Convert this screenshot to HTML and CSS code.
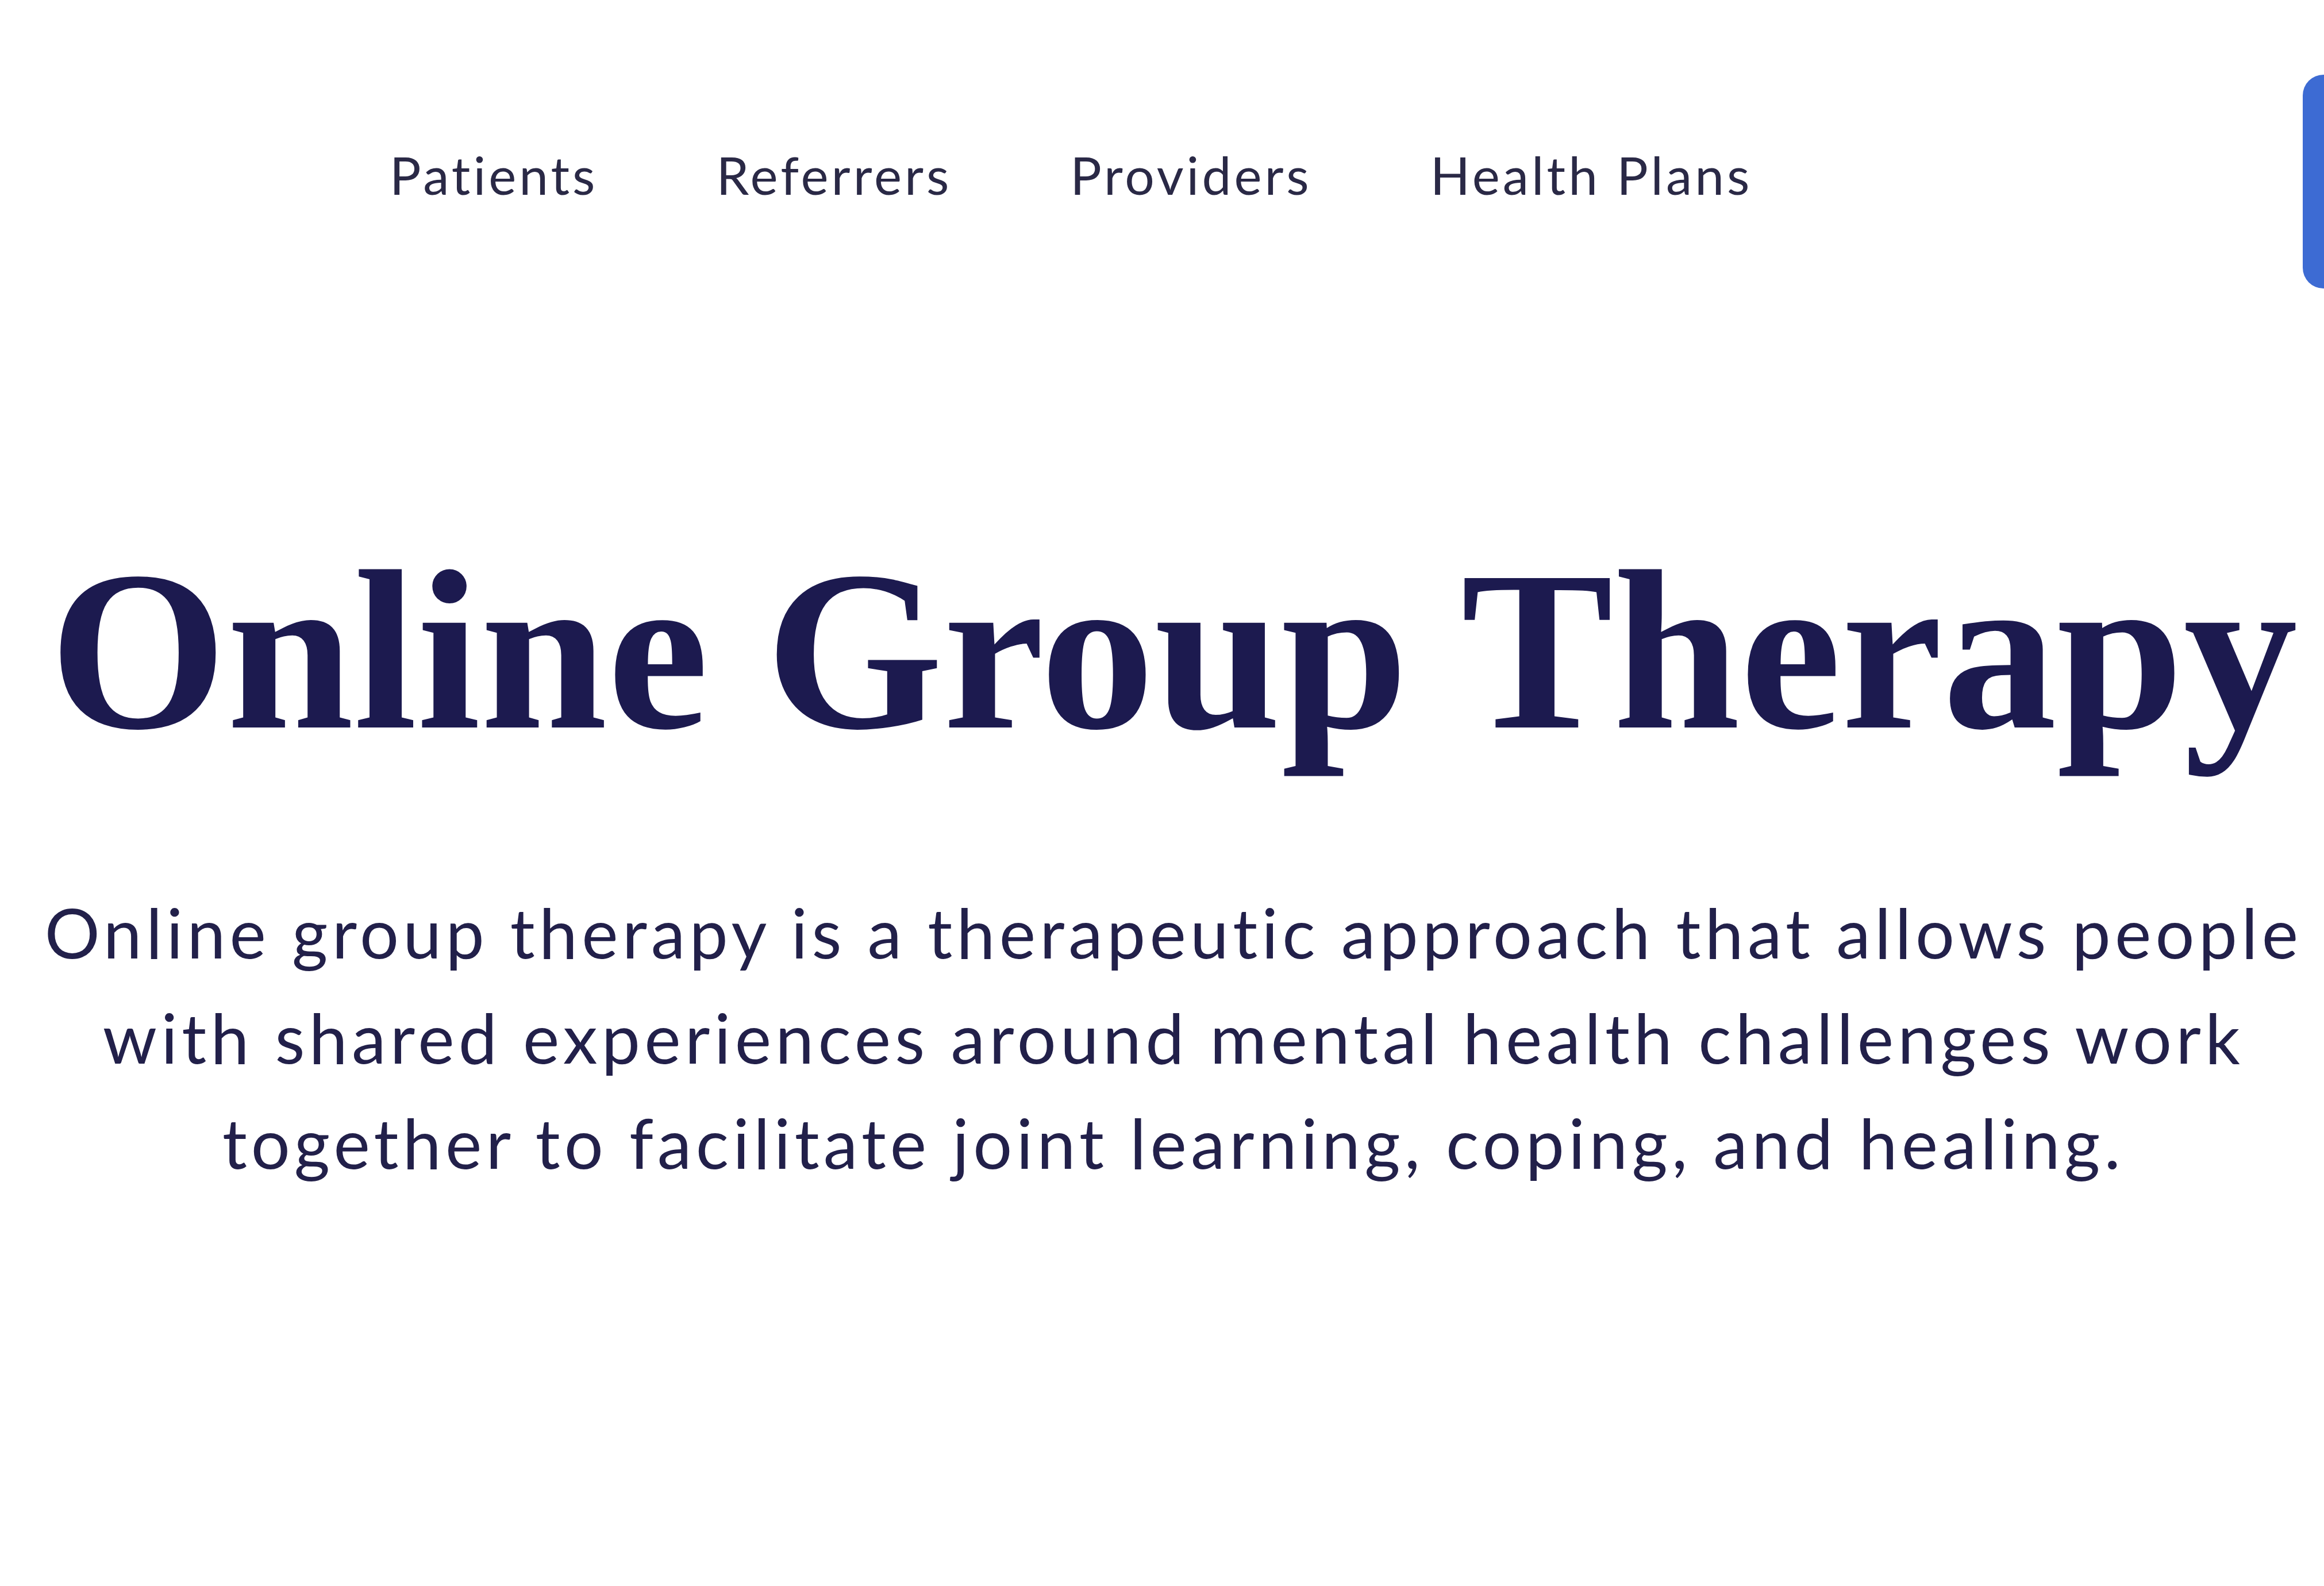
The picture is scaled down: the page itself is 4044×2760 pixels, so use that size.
FILE: index.html
```html
<!DOCTYPE html>
<html lang="en">
<head>
<meta charset="utf-8">
<title>Online Group Therapy</title>
<link rel="stylesheet" href="styles.css">
</head>
<body>
<header class="site-header">
  <nav class="main-nav">
    <a class="nav-link" href="#">Patients</a>
    <a class="nav-link" href="#">Referrers</a>
    <a class="nav-link" href="#">Providers</a>
    <a class="nav-link" href="#">Health Plans</a>
  </nav>
  <a class="cta-button" href="#" aria-label="Get started"></a>
</header>
<main class="hero">
  <h1 class="hero-title">Online Group Therapy</h1>
  <p class="hero-text">Online group therapy is a therapeutic approach that allows people with shared experiences around mental health challenges work together to facilitate joint learning, coping, and healing.</p>
</main>
</body>
</html>
```
FILE: styles.css
```css
html, body {
  margin: 0;
  padding: 0;
  background: #ffffff;
  overflow: hidden;
}

body {
  width: 4044px;
  height: 2760px;
  font-family: Lato, "Noto Sans", sans-serif;
  color: #22204a;
}

.site-header {
  display: flex;
  align-items: center;
  justify-content: space-between;
  padding: 130px 0 0 678px;
  height: 372px;
}

.main-nav {
  display: flex;
  gap: 206px;
  padding-bottom: 26px;
}

.nav-link {
  font-family: Lato, "Noto Sans", sans-serif;
  font-size: 91px;
  letter-spacing: 5px;
  color: #2a2946;
  text-decoration: none;
  white-space: nowrap;
}

.cta-button {
  flex-shrink: 0;
  display: block;
  width: 400px;
  height: 372px;
  margin-right: -363px;
  border-radius: 36px;
  background: #3d6bd3;
}

.hero {
  display: flex;
  flex-direction: column;
  align-items: center;
  padding-left: 40px;
  text-align: center;
}

.hero-title {
  margin: 412px 0 0;
  font-family: "Liberation Serif", "Times New Roman", serif;
  font-weight: 700;
  font-size: 397px;
  line-height: 1.1;
  color: #1c1a4f;
  white-space: nowrap;
}

.hero-text {
  margin: 180px 0 0;
  max-width: 4000px;
  font-family: Lato, "Noto Sans", sans-serif;
  font-size: 120px;
  line-height: 183px;
  letter-spacing: 7.2px;
  color: #22204a;
}
```
